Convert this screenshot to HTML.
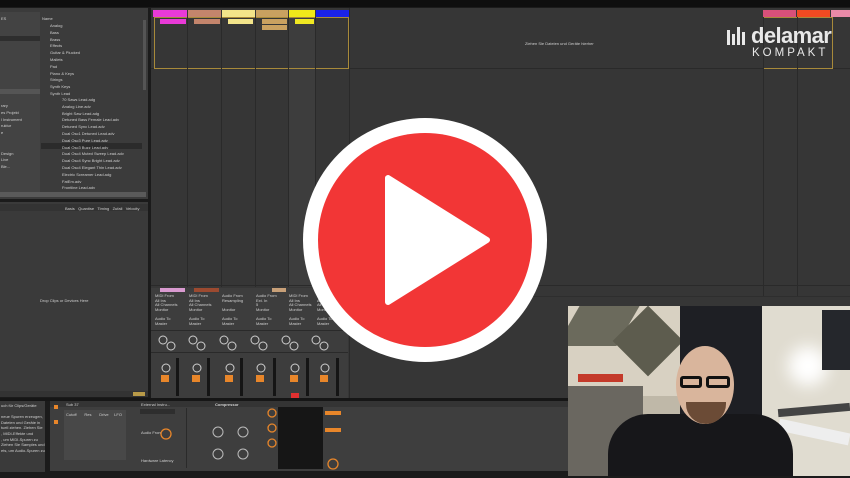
<!DOCTYPE html>
<html><head><meta charset="utf-8"><style>
*{margin:0;padding:0;box-sizing:border-box}
body{width:850px;height:478px;overflow:hidden;background:#1b1b1b;font-family:"Liberation Sans",sans-serif;position:relative}
.a{position:absolute}
.t{position:absolute;font-size:4px;color:#cfcfcf;white-space:nowrap}
</style></head><body>
<div class="a" style="left:0;top:0;width:850px;height:7px;background:#0e0e0e"></div>
<!-- left browser -->
<div class="a" style="left:0;top:8px;width:148px;height:191px;background:#3b3b3b"></div>
<div class="a" style="left:0;top:12px;width:40px;height:180px;background:#434343"></div>
<div class="a" style="left:0;top:36px;width:40px;height:5px;background:#2e2e2e"></div>
<div class="a" style="left:0;top:89px;width:40px;height:5px;background:#555"></div>
<div class="a" style="left:41px;top:143px;width:101px;height:6px;background:#2b2b2b"></div>
<div class="a" style="left:143px;top:20px;width:3px;height:70px;background:#555"></div>
<div class="a" style="left:0;top:192px;width:146px;height:5px;background:#5a5a5a"></div>
<div class="t" style="left:1px;top:16px">ES</div><div class="t" style="left:42px;top:16px">Name</div>
<div class="t" style="left:50px;top:23px;line-height:6.8px">Analog<br>Bass<br>Brass<br>Effects<br>Guitar &amp; Plucked<br>Mallets<br>Pad<br>Piano &amp; Keys<br>Strings<br>Synth Keys<br>Synth Lead</div>
<div class="t" style="left:62px;top:97px;line-height:6.8px">70 Saws Lead.adg<br>Analog Line.adv<br>Bright Saw Lead.adg<br>Detuned Bass Female Lead.adv<br>Detuned Sync Lead.adv<br>Dual Osc1 Detuned Lead.adv<br>Dual Osc3 Pure Lead.adv<br>Dual Osc3 Buzz Lead.adv<br>Dual Osc4 Muted Sweep Lead.adv<br>Dual Osc4 Sync Bright Lead.adv<br>Dual Osc4 Elegant Thin Lead.adv<br>Electric Screamer Lead.adg<br>FatEm.adv<br>Frontline Lead.adv</div>
<div class="t" style="left:1px;top:103px;line-height:6.8px">rary<br>es Projekt<br>l Instrument<br>ruktur<br>e<br><br><br>Design<br>Live<br>Ble...</div>
<!-- left lower -->
<div class="a" style="left:0;top:202px;width:148px;height:195px;background:#3a3a3a"></div>
<div class="a" style="left:0;top:204px;width:148px;height:7px;background:#333"></div>
<div class="t" style="left:65px;top:206px">Basis &nbsp; Quantise &nbsp; Timing &nbsp; Zufall &nbsp; Velocity</div>
<div class="t" style="left:40px;top:298px">Drop Clips or Devices Here</div>
<div class="a" style="left:0;top:391px;width:148px;height:6px;background:#333"></div>
<div class="a" style="left:133px;top:392px;width:12px;height:4px;background:#b89a48"></div>
<!-- session -->
<div class="a" style="left:151px;top:8px;width:699px;height:390px;background:#363636"></div>
<div class="a" style="left:151px;top:68px;width:699px;height:1px;background:#2a2a2a"></div>
<div class="a" style="left:349px;top:8px;width:1px;height:390px;background:#2a2a2a"></div>
<div class="a" style="left:153px;top:10px;width:34px;height:7px;background:#e93ad7"></div>
<div class="a" style="left:188px;top:10px;width:33px;height:7px;background:#c4856c"></div>
<div class="a" style="left:222px;top:10px;width:33px;height:7px;background:#f2e48a"></div>
<div class="a" style="left:256px;top:10px;width:32px;height:7px;background:#c9a160"></div>
<div class="a" style="left:289px;top:10px;width:26px;height:7px;background:#f0e81a"></div>
<div class="a" style="left:316px;top:10px;width:33px;height:7px;background:#1a22e8"></div>
<div class="a" style="left:763px;top:10px;width:33px;height:7px;background:#d8507a"></div>
<div class="a" style="left:797px;top:10px;width:33px;height:7px;background:#f04a22"></div>
<div class="a" style="left:831px;top:10px;width:19px;height:7px;background:#e98aa8"></div>
<div class="a" style="left:160px;top:19px;width:26px;height:5px;background:#e93ad7"></div>
<div class="a" style="left:194px;top:19px;width:26px;height:5px;background:#c4856c"></div>
<div class="a" style="left:228px;top:19px;width:25px;height:5px;background:#f2e48a"></div>
<div class="a" style="left:262px;top:19px;width:25px;height:5px;background:#c9a160"></div>
<div class="a" style="left:262px;top:25px;width:25px;height:5px;background:#c9a160"></div>
<div class="a" style="left:295px;top:19px;width:19px;height:5px;background:#f0e81a"></div>
<div class="a" style="left:289px;top:17px;width:26px;height:270px;background:rgba(255,255,255,.04)"></div>
<div class="a" style="left:154px;top:17px;width:195px;height:52px;border:1px solid #a88a3a"></div>
<div class="a" style="left:763px;top:17px;width:70px;height:52px;border:1px solid #a88a3a"></div>
<div class="a" style="left:187px;top:17px;width:1px;height:270px;background:#2a2a2a"></div>
<div class="a" style="left:221px;top:17px;width:1px;height:270px;background:#2a2a2a"></div>
<div class="a" style="left:255px;top:17px;width:1px;height:270px;background:#2a2a2a"></div>
<div class="a" style="left:288px;top:17px;width:1px;height:270px;background:#2a2a2a"></div>
<div class="a" style="left:315px;top:17px;width:1px;height:270px;background:#2a2a2a"></div>
<div class="a" style="left:763px;top:17px;width:1px;height:280px;background:#2a2a2a"></div>
<div class="a" style="left:797px;top:17px;width:1px;height:280px;background:#2a2a2a"></div>
<div class="a" style="left:151px;top:285px;width:699px;height:1px;background:#2a2a2a"></div>
<div class="a" style="left:350px;top:296px;width:500px;height:1px;background:#2e2e2e"></div>
<div class="t" style="left:525px;top:41px">Ziehen Sie Dateien und Geräte hierher</div>
<!-- logo -->
<div class="a" style="left:727px;top:30px;width:3px;height:15px;background:#e8e8e8"></div>
<div class="a" style="left:732px;top:34px;width:3px;height:11px;background:#e8e8e8"></div>
<div class="a" style="left:737px;top:27px;width:3px;height:18px;background:#e8e8e8"></div>
<div class="a" style="left:742px;top:32px;width:3px;height:13px;background:#e8e8e8"></div>
<div class="a" style="left:751px;top:23px;font-size:22px;font-weight:bold;color:#e8e8e8;letter-spacing:-0.6px">delamar</div>
<div class="a" style="left:752px;top:47px;font-size:11.5px;color:#e8e8e8;letter-spacing:3px">KOMPAKT</div>
<!-- mixer -->
<div class="a" style="left:151px;top:288px;width:197px;height:110px;background:#3d3d3d"></div>
<div class="a" style="left:160px;top:288px;width:25px;height:4px;background:#d99ad0"></div>
<div class="a" style="left:194px;top:288px;width:25px;height:4px;background:#9c4a30"></div>
<div class="a" style="left:272px;top:288px;width:14px;height:4px;background:#c8a078"></div>
<div class="t" style="left:155px;top:294px;line-height:4.6px">MIDI From<br>All Ins<br>All Channels<br>Monitor<br><br>Audio To<br>Master</div>
<div class="t" style="left:189px;top:294px;line-height:4.6px">MIDI From<br>All Ins<br>All Channels<br>Monitor<br><br>Audio To<br>Master</div>
<div class="t" style="left:222px;top:294px;line-height:4.6px">Audio From<br>Resampling<br><br>Monitor<br><br>Audio To<br>Master</div>
<div class="t" style="left:256px;top:294px;line-height:4.6px">Audio From<br>Ext. In<br>5<br>Monitor<br><br>Audio To<br>Master</div>
<div class="t" style="left:289px;top:294px;line-height:4.6px">MIDI From<br>All Ins<br>All Channels<br>Monitor<br><br>Audio To<br>Master</div>
<div class="t" style="left:317px;top:294px;line-height:4.6px">MIDI From<br>All Ins<br>All Ch<br>Monitor<br><br>Audio To<br>Master</div>
<div class="a" style="left:151px;top:330px;width:197px;height:1px;background:#2a2a2a"></div>
<div class="a" style="left:151px;top:352px;width:197px;height:1px;background:#2a2a2a"></div>
<svg class="a" style="left:151px;top:330px" width="200" height="68">
<g fill="none" stroke="#cfcfcf" stroke-width="1">
<circle cx="12" cy="10" r="4"/><circle cx="20" cy="16" r="4"/>
<circle cx="42" cy="10" r="4"/><circle cx="50" cy="16" r="4"/>
<circle cx="73" cy="10" r="4"/><circle cx="81" cy="16" r="4"/>
<circle cx="104" cy="10" r="4"/><circle cx="112" cy="16" r="4"/>
<circle cx="135" cy="10" r="4"/><circle cx="143" cy="16" r="4"/>
<circle cx="165" cy="10" r="4"/><circle cx="173" cy="16" r="4"/>
<circle cx="15" cy="38" r="4"/><circle cx="46" cy="38" r="4"/><circle cx="79" cy="38" r="4"/><circle cx="110" cy="38" r="4"/><circle cx="144" cy="38" r="4"/><circle cx="174" cy="38" r="4"/>
</g>
<g fill="#e8862a"><rect x="10" y="45" width="8" height="7"/><rect x="41" y="45" width="8" height="7"/><rect x="74" y="45" width="8" height="7"/><rect x="105" y="45" width="8" height="7"/><rect x="139" y="45" width="8" height="7"/><rect x="169" y="45" width="8" height="7"/></g>
<rect x="140" y="63" width="8" height="5" fill="#e03030"/>
<g fill="#151515"><rect x="25" y="28" width="3" height="38"/><rect x="56" y="28" width="3" height="38"/><rect x="89" y="28" width="3" height="38"/><rect x="122" y="28" width="3" height="38"/><rect x="155" y="28" width="3" height="38"/><rect x="185" y="28" width="3" height="38"/></g>
</svg>
<!-- device area -->
<div class="a" style="left:0;top:398px;width:850px;height:3px;background:#161616"></div>
<div class="a" style="left:0;top:401px;width:45px;height:71px;background:#3a3a3a"></div>
<div class="t" style="left:1px;top:403px;line-height:5.6px">uch für Clips/Geräte<br><br>neue Spuren erzeugen,<br>Dateien und Geräte in<br>tuell ziehen. Ziehen Sie<br>, MIDI-Effekte und<br>, um MIDI-Spuren zu<br>Ziehen Sie Samples und<br>ets, um Audio-Spuren zu</div>
<div class="a" style="left:50px;top:401px;width:520px;height:70px;background:#3e3e3e"></div>
<div class="a" style="left:50px;top:401px;width:520px;height:6px;background:#343434"></div>
<div class="t" style="left:66px;top:402px">Sub 37</div><div class="t" style="left:141px;top:402px">External Instru...</div><div class="t" style="left:215px;top:402px;font-weight:bold">Compressor</div>
<div class="a" style="left:54px;top:405px;width:4px;height:4px;background:#e8862a"></div>
<div class="a" style="left:54px;top:420px;width:4px;height:4px;background:#e8862a"></div>
<div class="a" style="left:64px;top:410px;width:62px;height:50px;background:#484848"></div>
<div class="t" style="left:66px;top:412px">Cutoff &nbsp; &nbsp; &nbsp; Res &nbsp; &nbsp; &nbsp; Drive &nbsp; &nbsp; LFO</div>
<div class="a" style="left:140px;top:409px;width:35px;height:5px;background:#2e2e2e"></div>
<div class="t" style="left:141px;top:430px">Audio From</div>
<div class="t" style="left:141px;top:458px">Hardware Latency</div>
<div class="a" style="left:186px;top:408px;width:1px;height:60px;background:#2a2a2a"></div>
<div class="a" style="left:278px;top:407px;width:45px;height:62px;background:#161616"></div>
<div class="a" style="left:325px;top:411px;width:16px;height:4px;background:#e8862a"></div>
<div class="a" style="left:325px;top:428px;width:16px;height:4px;background:#e8862a"></div>
<svg class="a" style="left:150px;top:405px" width="200" height="66"><g fill="none" stroke="#e8862a" stroke-width="1.3"><circle cx="16" cy="29" r="5"/><circle cx="122" cy="8" r="4"/><circle cx="122" cy="23" r="4"/><circle cx="122" cy="38" r="4"/><circle cx="183" cy="59" r="5"/></g><g fill="none" stroke="#bbb" stroke-width="1"><circle cx="68" cy="27" r="5"/><circle cx="93" cy="27" r="5"/><circle cx="68" cy="49" r="5"/><circle cx="93" cy="49" r="5"/></g></svg>
<div class="a" style="left:0;top:472px;width:568px;height:6px;background:#1b1b1b"></div>
<!-- webcam -->
<div class="a" style="left:568px;top:306px;width:282px;height:170px;background:#bfb8a8;overflow:hidden">
 <div class="a" style="left:0;top:0;width:115px;height:90px;background:#d8d1c2"></div>
 <div class="a" style="left:0;top:0;width:60px;height:40px;background:#6b6a5c;transform:skewX(-30deg)"></div>
 <div class="a" style="left:55px;top:10px;width:50px;height:50px;background:#5d5c4e;transform:rotate(45deg)"></div>
 <div class="a" style="left:112px;top:0;width:82px;height:170px;background:#1e1f24"></div>
 <div class="a" style="left:194px;top:0;width:88px;height:170px;background:#e0dcd0"></div>
 <div class="a" style="left:220px;top:40px;width:40px;height:40px;border-radius:50%;background:#fff;filter:blur(8px)"></div>
 <div class="a" style="left:254px;top:4px;width:30px;height:60px;background:#25272c"></div>
 <div class="a" style="left:210px;top:120px;width:72px;height:12px;background:#eee;transform:rotate(12deg)"></div>
 <div class="a" style="left:210px;top:100px;width:72px;height:8px;background:#444;transform:rotate(-5deg)"></div>
 <div class="a" style="left:0;top:80px;width:75px;height:90px;background:#6a6760"></div>
 <div class="a" style="left:10px;top:68px;width:45px;height:8px;background:#c43a2a"></div>
 <div class="a" style="left:40px;top:108px;width:185px;height:70px;border-radius:40px 40px 0 0;background:#17171a"></div>
 <div class="a" style="left:108px;top:40px;width:58px;height:78px;border-radius:50%;background:#d9b59c"></div>
 <div class="a" style="left:118px;top:96px;width:40px;height:22px;border-radius:0 0 20px 20px;background:#6b4b36"></div>
 <div class="a" style="left:112px;top:70px;width:22px;height:12px;border:3px solid #111;border-radius:3px"></div>
 <div class="a" style="left:138px;top:70px;width:24px;height:12px;border:3px solid #111;border-radius:3px"></div>
</div>
<!-- play button -->
<svg class="a" style="left:0;top:0" width="850" height="478">
<circle cx="425" cy="240" r="122" fill="#fff"/>
<circle cx="425" cy="240" r="107" fill="#f23636"/>
<path d="M388 178 L388 302 L487 240 Z" fill="#fff" stroke="#fff" stroke-width="6" stroke-linejoin="round"/>
</svg>
</body></html>
